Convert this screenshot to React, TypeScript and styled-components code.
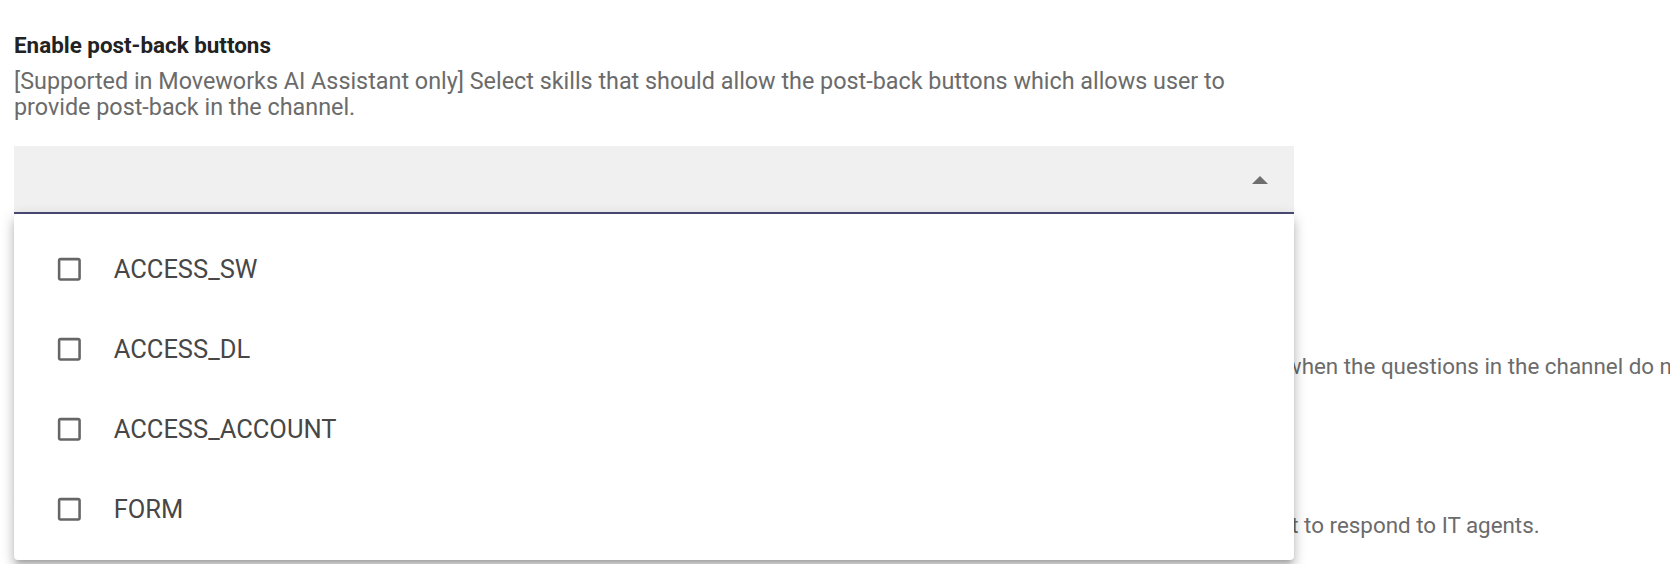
import React from 'react';
import styled, { createGlobalStyle } from 'styled-components';

const GlobalStyle = createGlobalStyle`
  body {
    margin: 0;
    background: #fff;
    font-family: Roboto, "Liberation Sans", sans-serif;
    overflow: hidden;
  }
`;

const Frame = styled.div`
  width: 1670px;
  height: 564px;
  overflow: hidden;
  background: #fff;
`;

const Page = styled.div`
  padding: 30px 14px 0;
  width: 1280px;
`;

const Section = styled.section<{ $gap?: number }>`
  margin-top: ${(p) => p.$gap || 0}px;
`;

const Title = styled.div`
  font-size: 22.4px;
  font-weight: 700;
  line-height: 30px;
  color: #222;
`;

const Description = styled.div<{ $nowrap?: boolean }>`
  margin-top: 7.7px;
  font-size: ${(p) => (p.$nowrap ? '22.4px' : '23.35px')};
  line-height: 26.6px;
  color: #6b6b6b;
  white-space: ${(p) => (p.$nowrap ? 'nowrap' : 'normal')};
`;

const SelectWrap = styled.div`
  position: relative;
  margin-top: 25px;
`;

const SelectBox = styled.div`
  height: 68px;
  box-sizing: border-box;
  background: #f0f0f0;
  border-bottom: 2px solid #4c4b78;
  display: flex;
  align-items: center;
  justify-content: flex-end;
  padding-right: 26px;
  padding-top: 2px;
`;

const Menu = styled.ul`
  position: absolute;
  top: 100%;
  left: 0;
  right: 0;
  margin: 0;
  padding: 15px 0 11px;
  list-style: none;
  background: #fff;
  border-radius: 4px;
  box-shadow: 0 5px 5px -3px rgba(0, 0, 0, 0.2), 0 8px 10px 1px rgba(0, 0, 0, 0.14),
    0 3px 14px 2px rgba(0, 0, 0, 0.12);
  z-index: 10;
`;

const Item = styled.li`
  height: 80px;
  display: flex;
  align-items: center;
  padding-left: 40px;
  cursor: pointer;
`;

const Label = styled.span`
  margin-left: 29px;
  font-size: 25.5px;
  color: #474747;
`;

const ArrowUp = () => (
  <svg width="16" height="8" viewBox="0 0 16 8">
    <path d="M0 8 L8 0 L16 8 Z" fill="#6e6e6e" />
  </svg>
);

const CheckBlank = () => (
  <svg width="30.7" height="30.7" viewBox="0 0 24 24">
    <path
      fill="#666"
      d="M19 5v14H5V5h14m0-2H5c-1.11 0-2 .9-2 2v14c0 1.1.89 2 2 2h14c1.1 0 2-.9 2-2V5c0-1.1-.9-2-2-2z"
    />
  </svg>
);

const skills = ['ACCESS_SW', 'ACCESS_DL', 'ACCESS_ACCOUNT', 'FORM'];

export default function App() {
  return (
    <Frame>
      <GlobalStyle />
      <Page>
        <Section>
          <Title>Enable post-back buttons</Title>
          <Description>
            [Supported in Moveworks AI Assistant only] Select skills that should allow the post-back buttons
            which allows user to provide post-back in the channel.
          </Description>
          <SelectWrap>
            <SelectBox>
              <ArrowUp />
            </SelectBox>
            <Menu>
              {skills.map((s) => (
                <Item key={s}>
                  <CheckBlank />
                  <Label>{s}</Label>
                </Item>
              ))}
            </Menu>
          </SelectWrap>
        </Section>
        <Section $gap={101.3}>
          <Title>Suggest alternative skills</Title>
          <Description $nowrap>
            Select skills that should be proposed by the Moveworks AI Assistant as alternative suggestions to all of
            the users in the channel when the questions in the channel do not match any of the configured skills.
          </Description>
        </Section>
        <Section $gap={94.4}>
          <Title>Allow agent replies</Title>
          <Description $nowrap>
            Select whether requesters of tickets should be able to reply to the questions of the IT agents by using the
            Moveworks AI Assistant to respond to IT agents.
          </Description>
        </Section>
      </Page>
    </Frame>
  );
}
